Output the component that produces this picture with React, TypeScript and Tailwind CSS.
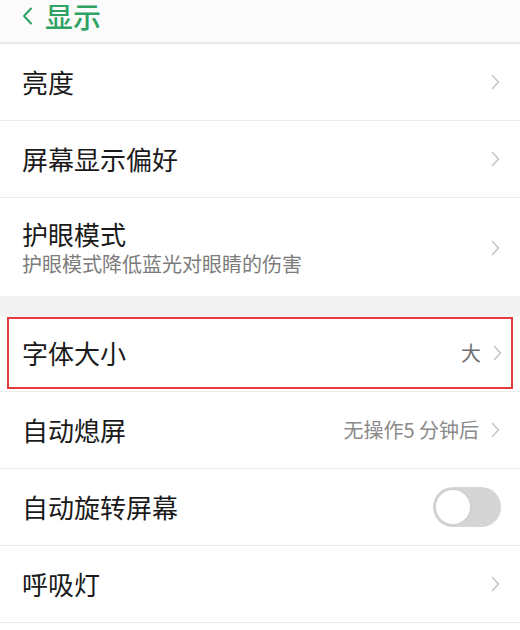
import React from "react";

function Chevron() {
  return (
    <svg width="9" height="16" viewBox="0 0 9 16" className="shrink-0">
      <path d="M1.5 1.5 L7.5 8 L1.5 14.5" fill="none" stroke="#c6c6c6" strokeWidth="1.6" strokeLinecap="round" strokeLinejoin="round" />
    </svg>
  );
}

function Toggle() {
  return (
    <div className="w-[68px] h-[40px] rounded-full bg-[#d5d5d5] flex items-center p-[1px]">
      <div className="w-[38px] h-[38px] rounded-full bg-white border-2 border-[#d0d0d0]" />
    </div>
  );
}

function Row({ title, value, children }: { title: string; value?: string; children?: React.ReactNode }) {
  return (
    <div className="h-[77px] border-b border-[#ececec] flex items-center pl-[22px] pr-[20px]">
      <div className="flex-1 text-[26px] text-[#1a1a1a] leading-[32px]">{title}</div>
      {children ?? (
        <div className="flex items-center gap-[12px]">
          {value && <span className="text-[20px] text-[#8a8a8a]">{value}</span>}
          <Chevron />
        </div>
      )}
    </div>
  );
}

export default function App() {
  return (
    <div className="w-[520px] h-[630px] overflow-hidden bg-white" style={{ fontFamily: '"Noto Sans CJK SC", "Noto Sans", sans-serif' }}>
      {/* header */}
      <div className="h-[44px] border-b-2 border-[#e9e9e9] bg-[#fbfbfb]">
        <div className="flex items-center h-[32px] pl-[22px] gap-[12px] text-[#2ea364]">
          <svg width="11" height="18" viewBox="0 0 11 18">
            <path d="M9 1.5 L2 9 L9 16.5" fill="none" stroke="#2ea364" strokeWidth="2" strokeLinecap="round" strokeLinejoin="round" />
          </svg>
          <span className="text-[28px] font-medium leading-[32px]">显示</span>
        </div>
      </div>

      <Row title="亮度" />
      <Row title="屏幕显示偏好" />
      <div className="h-[98px] pt-[20px] pl-[22px] pr-[20px] flex items-start">
        <div className="flex-1">
          <div className="text-[26px] text-[#1a1a1a] leading-[32px]">护眼模式</div>
          <div className="text-[20px] text-[#7c7c7c] leading-[28px]">护眼模式降低蓝光对眼睛的伤害</div>
        </div>
        <div className="h-[60px] flex items-center">
          <Chevron />
        </div>
      </div>

      <div className="h-[21px] bg-[#f2f2f2]" />

      {/* font size, outlined */}
      <div className="h-[75px] border-b border-[#ececec] px-[7px] pb-[2px]">
        <div className="h-[72px] border-2 border-[#e23a40] flex items-center pl-[13px] pr-[9px]">
          <div className="flex-1 text-[26px] text-[#1a1a1a] leading-[32px]">字体大小</div>
          <div className="flex items-center gap-[12px]">
            <span className="text-[20px] text-[#6e6e6e]">大</span>
            <Chevron />
          </div>
        </div>
      </div>

      <Row title="自动熄屏" value="无操作5 分钟后" />
      <Row title="自动旋转屏幕">
        <div className="-mr-[1px]">
          <Toggle />
        </div>
      </Row>
      <Row title="呼吸灯" />
    </div>
  );
}
